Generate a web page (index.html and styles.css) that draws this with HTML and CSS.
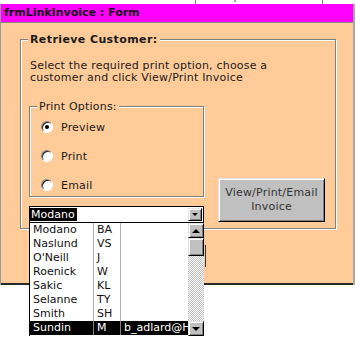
FILE: index.html
```html
<!DOCTYPE html>
<html lang="en">
<head>
  <meta charset="UTF-8" />
  <meta name="viewport" content="width=device-width, initial-scale=1.0"/>
  <title>frmLinkInvoice : Form</title>
  <link rel="stylesheet" href="styles.css">
</head>
<body>

<div class="behind">
  <span class="col-head desc">Description</span>
  <span class="col-head prod">Product</span>
</div>

<div class="window">
  <div class="titlebar">frmLinkInvoice : Form</div>

  <div class="form-body">
    <fieldset class="group retrieve">
      <legend>Retrieve Customer:</legend>
      <p class="hint">Select the required print option, choose a<br>customer and click View/Print Invoice</p>

      <div class="controls">
        <div class="left-col">
          <fieldset class="group options">
            <legend>Print Options:</legend>
            <label class="radio"><input type="radio" name="opt" checked> Preview</label>
            <label class="radio"><input type="radio" name="opt"> Print</label>
            <label class="radio"><input type="radio" name="opt"> Email</label>
          </fieldset>

          <div class="combo">
            <span class="combo-value"><span class="sel">Modano</span></span>
            <span class="win-btn combo-btn"><span class="arrow down"></span></span>

            <div class="dropdown">
              <div class="rows">
                <div class="row"><span>Modano</span><span>BA</span><span></span></div>
                <div class="row"><span>Naslund</span><span>VS</span><span></span></div>
                <div class="row"><span>O'Neill</span><span>J</span><span></span></div>
                <div class="row"><span>Roenick</span><span>W</span><span></span></div>
                <div class="row"><span>Sakic</span><span>KL</span><span></span></div>
                <div class="row"><span>Selanne</span><span>TY</span><span></span></div>
                <div class="row"><span>Smith</span><span>SH</span><span></span></div>
                <div class="row selected"><span>Sundin</span><span>M</span><span>b_adlard@Hotmail.com</span></div>
              </div>
              <div class="scroll">
                <span class="win-btn scroll-btn"><span class="arrow up"></span></span>
                <span class="win-btn thumb"></span>
                <span class="trough"></span>
                <span class="win-btn scroll-btn"><span class="arrow down big"></span></span>
              </div>
            </div>
          </div>
        </div>

        <button type="button" class="win-btn view-btn">View/Print/Email<br>Invoice</button>
      </div>
    </fieldset>
  </div>
</div>

</body>
</html>
```

FILE: styles.css
```css
* { box-sizing: border-box; }

body {
  margin: 0;
  min-height: 350px;
  background: #fff;
  font-family: "DejaVu Sans", Verdana, sans-serif;
  font-size: 11px;
  color: #1a1a1a;
}

/* the datasheet peeking out above the form */
.behind {
  height: 4px;
  overflow: hidden;
  display: flex;
  padding-left: 195px;
  gap: 60px;
}

.col-head {
  margin-top: -9px;
  line-height: 12px;
  padding-left: 3px;
  border-left: 1px solid #808080;
  color: #555;
}

.window {
  width: 355px;
  border-left: 1px solid #9a9a9a;
  border-right: 2px solid #a8a8a8;
}

.titlebar {
  height: 19px;
  background: #f0f;
  border-bottom: 1px solid #8c8c8c;
  padding-left: 3px;
  line-height: 18px;
  font-weight: bold;
  font-size: 11px;
  color: #111;
}

.form-body {
  height: 262px;
  background: #fc9;
  border-bottom: 2px solid #2a2a2a;
  padding-top: 10px;
}

.group {
  margin: 0;
  padding: 0;
  border: 1px solid #808080;
  box-shadow: inset 1px 1px 0 #fff, 1px 1px 0 #fff;
}

.group legend {
  padding: 0 2px;
  margin-left: 7px;
  line-height: 13px;
  letter-spacing: 0.2px;
  background: #fc9;
}

.retrieve {
  width: 316px;
  margin-left: 19px;
  padding-bottom: 5px;
}

.retrieve > legend {
  font-weight: bold;
  letter-spacing: 0.4px;
}

.hint {
  margin: 14px 0 0 9px;
  line-height: 12px;
  letter-spacing: 0.2px;
}

.controls {
  display: flex;
  margin-top: 16px;
  padding-left: 8px;
}

.left-col {
  width: 175px;
}

.options {
  width: 175px;
  padding: 4px 0 1px;
  display: flex;
  flex-direction: column;
  gap: 9px;
}

.radio {
  display: flex;
  align-items: center;
  height: 20px;
  gap: 8px;
  padding-left: 11px;
  letter-spacing: 0.2px;
}

.radio input {
  appearance: none;
  margin: 0;
  width: 12px;
  height: 12px;
  border-radius: 50%;
  background: #fff;
  border: 1px solid;
  border-color: #808080 #fff #fff #808080;
  box-shadow: inset 1px 1px 0 #222;
  position: relative;
}

.radio input:checked::before {
  content: "";
  position: absolute;
  top: 3px;
  left: 3px;
  width: 4px;
  height: 4px;
  border-radius: 50%;
  background: #000;
}

.combo {
  position: relative;
  margin-top: 9px;
  width: 175px;
  height: 17px;
  display: flex;
  justify-content: space-between;
  background: #fff;
  border: 1px solid #000;
}

.combo-value {
  padding: 1px 0 0 0;
  line-height: 13px;
}

.sel {
  display: inline-block;
  background: #000;
  color: #fff;
  padding: 0 2px 0 1px;
}

.win-btn {
  background: #c0c0c0;
  border: 1px solid;
  border-color: #e4e4e4 #000 #000 #e4e4e4;
  box-shadow: inset 1px 1px 0 #fff, inset -1px -1px 0 #808080;
  display: flex;
  align-items: center;
  justify-content: center;
}

.combo-btn {
  width: 14px;
  height: 13px;
  margin: 1px 1px 0 0;
}

.arrow {
  width: 0;
  height: 0;
  border-left: 3px solid transparent;
  border-right: 3px solid transparent;
}

.arrow.down {
  border-top: 3px solid #000;
}

.arrow.up {
  border-left-width: 4px;
  border-right-width: 4px;
  border-bottom: 4px solid #000;
}

.arrow.down.big {
  border-left-width: 4px;
  border-right-width: 4px;
  border-top-width: 4px;
}

.dropdown {
  position: absolute;
  top: 100%;
  left: -1px;
  width: 175px;
  display: flex;
  background: #fff;
  border-left: 1px solid #000;
  border-top: 1px solid #000;
  z-index: 2;
}

.dropdown::after {
  content: "";
  position: absolute;
  right: -2px;
  top: 22px;
  width: 1px;
  height: 22px;
  background: #333;
}

.rows {
  width: 158px;
}

.row {
  display: grid;
  grid-template-columns: 64px 27px 67px;
  height: 14px;
  line-height: 14px;
  color: #111;
}

.row span {
  padding-left: 3px;
  white-space: nowrap;
  overflow: hidden;
}

.row span:nth-child(-n+2) {
  border-right: 1px solid #b0b0b0;
}

.row.selected {
  background: #000;
  color: #fff;
}

.row.selected span:nth-child(-n+2) {
  border-right-color: #808080;
}

.scroll {
  width: 16px;
  height: 113px;
  display: flex;
  flex-direction: column;
}

.scroll-btn {
  height: 15px;
}

.thumb {
  height: 18px;
}

.trough {
  flex: 1;
  background-image: repeating-conic-gradient(#c0c0c0 0 25%, #fff 0 50%);
  background-size: 2px 2px;
}

.view-btn {
  align-self: flex-end;
  width: 107px;
  height: 44px;
  margin: 0 0 1px 14px;
  padding: 0;
  font-family: inherit;
  font-size: 11px;
  line-height: 14px;
  letter-spacing: 0.2px;
  color: #333;
  flex-direction: column;
}
```
